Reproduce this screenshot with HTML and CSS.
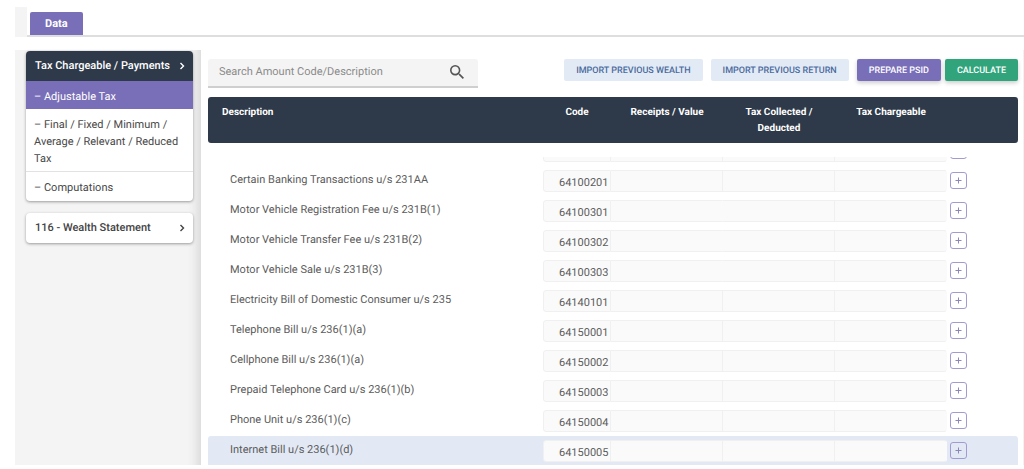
FILE: index.html
```html
<!DOCTYPE html>
<html lang="en">
<head>
<meta charset="utf-8">
<meta name="viewport" content="width=device-width, initial-scale=1">
<title>Tax Return - Data</title>
<link rel="stylesheet" href="styles.css">
</head>
<body>
<div class="app">
  <div class="tabs" role="tablist">
    <button class="tab" type="button" role="tab" aria-selected="true">Data</button>
  </div>
  <div class="layout">
    <nav class="sidebar" aria-label="Sections">
      <div class="card">
        <button class="card-head dark" type="button">Tax Chargeable / Payments
          <svg class="chevron" viewBox="0 0 6 8" aria-hidden="true"><path d="M1.5 1l3 3-3 3"/></svg>
        </button>
        <a class="link active" href="#adjustable">– Adjustable Tax</a>
        <a class="link" href="#final">– Final / Fixed / Minimum / Average / Relevant / Reduced Tax</a>
        <a class="link" href="#computations">– Computations</a>
      </div>
      <div class="card">
        <button class="card-head" type="button">116 - Wealth Statement
          <svg class="chevron" viewBox="0 0 6 8" aria-hidden="true"><path d="M1.5 1l3 3-3 3"/></svg>
        </button>
      </div>
    </nav>
    <main class="main">
      <div class="toolbar">
        <div class="search">
          <input class="search-input" type="text" placeholder="Search Amount Code/Description" aria-label="Search Amount Code/Description">
          <button class="search-button" type="button" aria-label="Search">
            <svg class="search-icon" viewBox="3 3 17.5 17.5" aria-hidden="true"><path d="M15.5 14h-.79l-.28-.27A6.47 6.47 0 0 0 16 9.5 6.5 6.5 0 1 0 9.500 16c1.610 0 3.090-.59 4.230-1.570l.27.28v.79l5 4.990L20.490 19l-4.990-5zm-6 0C7.010 14 5 11.990 5 9.500S7.010 5 9.500 5 14 7.010 14 9.500 11.990 14 9.500 14z"/></svg>
          </button>
        </div>
        <div class="actions">
          <button class="btn light" type="button">IMPORT PREVIOUS WEALTH</button>
          <button class="btn light" type="button">IMPORT PREVIOUS RETURN</button>
          <div class="pair">
            <button class="btn purple" type="button">PREPARE PSID</button>
            <button class="btn green" type="button">CALCULATE</button>
          </div>
        </div>
      </div>
      <table class="grid">
        <thead>
          <tr>
            <th class="desc-head">Description</th>
            <th>Code</th>
            <th>Receipts / Value</th>
            <th>Tax Collected / Deducted</th>
            <th>Tax Chargeable</th>
            <td></td>
          </tr>
        </thead>
        <tbody id="rows"></tbody>
      </table>
    </main>
  </div>
</div>
<script src="rows.js"></script>
</body>
</html>
```
FILE: rows.js
```js
const rows = [
  { name: "", code: "" },
  { name: "Certain Banking Transactions u/s 231AA", code: "64100201" },
  { name: "Motor Vehicle Registration Fee u/s 231B(1)", code: "64100301", joined: true },
  { name: "Motor Vehicle Transfer Fee u/s 231B(2)", code: "64100302", joined: true },
  { name: "Motor Vehicle Sale u/s 231B(3)", code: "64100303", joined: true },
  { name: "Electricity Bill of Domestic Consumer u/s 235", code: "64140101" },
  { name: "Telephone Bill u/s 236(1)(a)", code: "64150001" },
  { name: "Cellphone Bill u/s 236(1)(a)", code: "64150002" },
  { name: "Prepaid Telephone Card u/s 236(1)(b)", code: "64150003" },
  { name: "Phone Unit u/s 236(1)(c)", code: "64150004" },
  { name: "Internet Bill u/s 236(1)(d)", code: "64150005", hover: true }
];

const field = (label, value, extra) =>
  `<td><input class="field ${extra}" type="text" aria-label="${label}" value="${value}" readonly></td>`;

document.getElementById("rows").innerHTML = rows.map((r) => `
  <tr class="${r.hover ? "hover" : ""}">
    <td class="desc">${r.name}</td>
    ${field("Code", r.code, "code")}
    ${field("Receipts / Value", "", r.joined ? "joined" : "")}
    ${field("Tax Collected / Deducted", "", "")}
    ${field("Tax Chargeable", "", "last")}
    <td class="add-cell"><button class="add" type="button" aria-label="Add ${r.name}"><svg class="plus" viewBox="0 0 7 7" aria-hidden="true"><path d="M3.5 0.500v6M0.500 3.500h6"/></svg></button></td>
  </tr>`).join("");
```
FILE: styles.css
```css
* {
  box-sizing: border-box;
}

body {
  margin: 0;
  background: #fff;
  color: #5c5c5c;
  font-family: Roboto, "Liberation Sans", sans-serif;
  font-size: 11px;
  text-rendering: geometricPrecision;
}

button,
input {
  margin: 0;
  padding: 0;
  border: 0;
  background: none;
  color: inherit;
  font: inherit;
  text-rendering: inherit;
}

.app {
  margin: 7px 0 0 15px;
  background: #f4f4f4;
}

.tabs {
  margin-left: 12px;
  padding: 5px 3px 0;
  border-bottom: 2px solid #dedede;
  background: #fff;
}

.tab {
  display: block;
  height: 23px;
  padding: 0 15px;
  border-radius: 2px 2px 0 0;
  background: #796eb8;
  color: #fff;
  font-weight: 700;
}

.layout {
  display: flex;
  border-top: 13px solid #fff;
}

.sidebar {
  display: flex;
  flex-direction: column;
  gap: 12px;
  width: 186px;
  padding: 1px 8px 0 11px;
  box-shadow: inset -14px 0 12px -12px #d0d0d0;
}

.card {
  overflow: hidden;
  flex: none;
  border-radius: 4px;
  background: #fff;
  box-shadow: 0 1px 3px #999;
}

.card-head {
  display: flex;
  align-items: center;
  justify-content: space-between;
  width: 100%;
  height: 30px;
  padding: 0 8px 1px 9px;
  color: #444;
  font-size: 11px;
  font-weight: 500;
  white-space: nowrap;
}

.card-head.dark {
  background: #2e3949;
  color: #fff;
}

.chevron {
  width: 6px;
  height: 8px;
  fill: none;
  stroke: currentColor;
  stroke-width: 1.4;
}

.link {
  display: block;
  padding: 7px 12px 4px 8px;
  border-bottom: 1px solid #e2e2e2;
  color: #484848;
  line-height: 17px;
  text-decoration: none;
}

.link:last-child {
  padding-bottom: 5px;
  border-bottom: 0;
}

.link.active {
  border-bottom: 0;
  background: #796eb8;
  color: #fff;
}

.main {
  flex: 1;
  min-width: 0;
  padding: 9px 5px 0 7px;
  border-right: 1px solid #f2f2f2;
  background: #fff;
}

.toolbar {
  display: flex;
  align-items: flex-start;
  justify-content: space-between;
  gap: 16px;
}

.search {
  display: flex;
  align-items: center;
  flex: 0 1 270px;
  height: 29px;
  padding: 0 14px 2px 11px;
  border-bottom: 2px solid #cfcfcf;
  border-radius: 3px 3px 0 0;
  background: #f4f4f4;
}

.search-input {
  flex: 1;
  min-width: 0;
  outline: 0;
}

.search-input::placeholder {
  color: #8b8b8b;
}

.search-button {
  display: flex;
}

.search-icon {
  width: 14px;
  height: 14px;
  fill: #555;
}

.actions {
  display: flex;
  gap: 8px;
}

.pair {
  display: flex;
  gap: 4px;
}

.btn {
  height: 22px;
  padding: 1px 12px 0;
  border-radius: 2px;
  font-size: 9px;
  font-weight: 500;
  white-space: nowrap;
}

.btn.light {
  background: #e2eaf6;
  color: #4b6b9c;
}

.btn.purple {
  background: #796eb8;
  color: #fff;
  box-shadow: 0 2px 4px #ccc;
}

.btn.green {
  background: #32a47b;
  color: #fff;
  box-shadow: 0 2px 4px #ccc;
}

.grid,
.grid thead,
.grid tbody {
  display: block;
}

.grid {
  margin-top: 9px;
}

.grid tr {
  display: grid;
  grid-template-columns: minmax(0, 1fr) 68px repeat(3, 112px) 71px;
}

.grid th,
.grid td {
  padding: 0;
}

.grid thead {
  margin-bottom: 14px;
  padding: 8px 0 6px;
  border-radius: 3px;
  background: #2e3949;
  color: #fff;
}

.grid th {
  padding: 0 16px;
  font-size: 10px;
  font-weight: 700;
  line-height: 16px;
  white-space: nowrap;
}

.grid th:nth-child(4) {
  white-space: normal;
}

.grid th.desc-head {
  padding-left: 14px;
  text-align: left;
}

.grid tbody {
  overflow: hidden;
}

.grid tbody tr {
  height: 30px;
  padding-top: 4px;
}

/* The list is scrolled part of the way past its first row. */
.grid tbody tr:first-child {
  margin-top: -21px;
}

.grid tbody tr:last-child {
  height: 29px;
}

.grid tr.hover {
  border-radius: 3px 3px 0 0;
  background: #e2e9f5;
}

.grid .desc {
  padding-left: 22px;
  line-height: 20px;
}

.field {
  display: block;
  width: 100%;
  height: 22px;
  border: 1px solid #f0f0f0;
  border-left-width: 0;
  background: #fafafa;
}

.field.code {
  padding: 2px 0 0 15px;
  border-left-width: 1px;
  border-radius: 3px 0 0 3px;
}

.field.joined {
  border-right-color: #fafafa;
}

.field.last {
  border-right-color: #fafafa;
  border-radius: 0 3px 3px 0;
}

.grid .add-cell {
  padding: 2px 0 0 3px;
}

.add {
  display: flex;
  align-items: center;
  justify-content: center;
  width: 17px;
  height: 17px;
  border: 1px solid #a39bcd;
  border-radius: 3px;
}

.plus {
  width: 7px;
  height: 7px;
  fill: none;
  stroke: #8d86b8;
}
```
